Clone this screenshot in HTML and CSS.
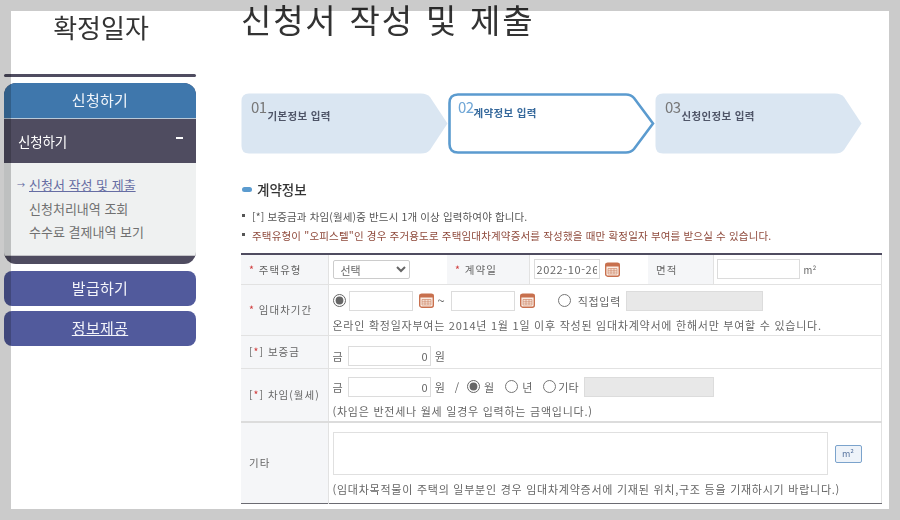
FILE: index.html
```html
<!DOCTYPE html>
<html lang="ko">
<head>
<meta charset="utf-8">
<title>확정일자</title>
<link rel="stylesheet" href="styles.css">
</head>
<body>
<div class="page">
  <aside class="side">
    <div class="brand">확정일자</div>
    <div class="side-rule"></div>
    <div class="panel">
      <div class="panel-head">신청하기</div>
      <div class="panel-sub"><span>신청하기</span><span class="minus"></span></div>
      <ul class="panel-list">
        <li class="on"><span class="arrow">→</span><a href="#">신청서 작성 및 제출</a></li>
        <li>신청처리내역 조회</li>
        <li>수수료 결제내역 보기</li>
      </ul>
    </div>
    <div class="side-btn">발급하기</div>
    <div class="side-btn low"><u>정보제공</u></div>
  </aside>
  <main class="main">
    <h1 class="title">신청서 작성 및 제출</h1>
    <ol class="steps">
      <li class="step">
        <svg class="step-bg" viewBox="0 0 207 61"><path d="M8 .5H180Q186 .5 189 4L206.500 30.500 189 57Q186 60.500 180 60.500H8Q.5 60.500 .5 53V8Q.5 .5 8 .5Z" fill="#dae6f2"/></svg>
        <b class="num">01</b><span class="lbl">기본정보 입력</span>
      </li>
      <li class="step cur">
        <svg class="step-bg" viewBox="0 0 207 61"><path d="M10 1.500H178Q183 1.500 186 5L205 30.500 186 56Q183 59.500 178 59.500H10Q1.500 59.500 1.500 51V10Q1.500 1.500 10 1.500Z" fill="#fff" stroke="#5b9bcf" stroke-width="2.600"/></svg>
        <b class="num">02</b><span class="lbl">계약정보 입력</span>
      </li>
      <li class="step">
        <svg class="step-bg" viewBox="0 0 207 61"><path d="M8 .5H180Q186 .5 189 4L206.500 30.500 189 57Q186 60.500 180 60.500H8Q.5 60.500 .5 53V8Q.5 .5 8 .5Z" fill="#dae6f2"/></svg>
        <b class="num">03</b><span class="lbl">신청인정보 입력</span>
      </li>
    </ol>
    <h2 class="sec"><i class="pill"></i>계약정보</h2>
    <ul class="notes">
      <li>[*] 보증금과 차임(월세)중 반드시 1개 이상 입력하여야 합니다.</li>
      <li class="red">주택유형이 "오피스텔"인 경우 주거용도로 주택임대차계약증서를 작성했을 때만 확정일자 부여를 받으실 수 있습니다.</li>
    </ul>
    <table class="form">
      <colgroup><col class="c1"><col class="c2"><col class="c3"><col class="c4"><col class="c5"><col class="c6"></colgroup>
      <tr class="r1">
        <th><em>*</em> 주택유형</th>
        <td><select class="sel"><option>선택</option></select></td>
        <th><em>*</em> 계약일</th>
        <td><span class="inl"><input class="in date" value="2022-10-26"><svg class="cal" viewBox="0 0 15 15"><use href="#cal"/></svg></span></td>
        <th>면적</th>
        <td class="area-cell"><input class="in area"> <span class="unit">m²</span></td>
      </tr>
      <tr class="r2">
        <th><em>*</em> 임대차기간</th>
        <td colspan="5">
          <div class="line">
            <input type="radio" name="p" checked class="rd">
            <input class="in d2"><svg class="cal" viewBox="0 0 15 15"><use href="#cal"/></svg>
            <span class="tilde">~</span>
            <input class="in d2b"><svg class="cal" viewBox="0 0 15 15"><use href="#cal"/></svg>
            <input type="radio" name="p" class="rd rd-far">
            <span class="direct">직접입력</span>
            <input class="in off w137" disabled>
          </div>
          <p class="hint">온라인 확정일자부여는 2014년 1월 1일 이후 작성된 임대차계약서에 한해서만 부여할 수 있습니다.</p>
        </td>
      </tr>
      <tr class="r3">
        <th>[<em>*</em>] 보증금</th>
        <td colspan="5"><div class="line"><span>금</span><input class="in money" value="0"><span>원</span></div></td>
      </tr>
      <tr class="r4">
        <th>[<em>*</em>] 차임(월세)</th>
        <td colspan="5">
          <div class="line">
            <span>금</span><input class="in money" value="0"><span>원</span>
            <span class="slash">/</span>
            <input type="radio" name="u" checked class="rd"><span class="rl">월</span>
            <input type="radio" name="u" class="rd"><span class="rl">년</span>
            <input type="radio" name="u" class="rd"><span class="rl last">기타</span>
            <input class="in off w130" disabled>
          </div>
          <p class="hint">(차임은 반전세나 월세 일경우 입력하는 금액입니다.)</p>
        </td>
      </tr>
      <tr class="r5">
        <th>기타</th>
        <td colspan="5">
          <div class="line-area"><textarea class="ta"></textarea><button class="sq">m²</button></div>
          <p class="hint">(임대차목적물이 주택의 일부분인 경우 임대차계약증서에 기재된 위치,구조 등을 기재하시기 바랍니다.)</p>
        </td>
      </tr>
    </table>
  </main>
</div>
<svg class="defs" width="0" height="0"><symbol id="cal" viewBox="0 0 15 15"><rect x=".7" y="1.200" width="13.600" height="13" rx="2" fill="#fbeee6" stroke="#c8704e" stroke-width="1.400"/><rect x=".7" y="1.200" width="13.600" height="3.300" fill="#c8704e"/><path d="M3 6.500h9v5.500H3zM3 8.300h9M3 10.100h9M6 6.500v5.500M9 6.500v5.500" fill="none" stroke="#cf8a6c" stroke-width=".7"/></symbol></svg>
<div class="frame"></div>
</body>
</html>
```
FILE: styles.css
```css
* { box-sizing: border-box; }
html, body { margin: 0; padding: 0; width: 900px; height: 520px; overflow: hidden; background: #fff; }
body { font-family: "Noto Sans CJK KR", "Noto Sans", sans-serif; color: #555; font-size: 11px; }
.page { display: flex; width: 900px; height: 520px; overflow: hidden; align-items: flex-start; filter: blur(.3px); }
.defs { position: absolute; }
.frame { position: absolute; inset: 0; border: solid #cbcbcb; border-width: 11px; pointer-events: none; mix-blend-mode: multiply; }

.side { width: 192px; margin-left: 4px; flex: none; }
.brand { height: 74px; padding: 9px 0 0 2px; text-align: center; font-size: 26px; line-height: 36px; color: #333; }
.side-rule { height: 3px; background: #4f4c60; border-radius: 2px; margin-bottom: 6px; }
.panel { border-radius: 12px; overflow: hidden; background: #4f4c60; height: 181px; }
.panel-head { height: 36px; background: #3f77ac; color: #f1f5fa; text-align: center; font-size: 15px; letter-spacing: .3px; line-height: 34px; border-bottom: 1px solid #b9c9d8; }
.panel-sub { height: 44px; display: flex; justify-content: space-between; align-items: center; padding: 0 13px 0 14px; color: #fff; font-size: 13.500px; letter-spacing: -.2px; }
.minus { width: 7px; height: 2px; background: #fff; margin-bottom: 6px; }
.panel-list { list-style: none; margin: 0; padding: 10px 0 0 25px; height: 93px; background: #eff1f1; border-bottom: 1px solid #c4c4c8; font-size: 13px; line-height: 23.500px; color: #707070; position: relative; }
.panel-list li { white-space: nowrap; }
.panel-list a { color: #666da3; }
.arrow { position: absolute; left: 13px; font-size: 8px; color: #5d649c; }
.side-btn { height: 35px; margin-top: 5px; background: #515a9c; color: #f3f4fa; text-align: center; font-size: 15px; letter-spacing: .3px; line-height: 33px; border-radius: 8px; }
.panel + .side-btn { margin-top: 7px; }
.low { line-height: 34px; }

.main { margin-left: 45px; width: 640px; flex: none; }
.title { margin: 0; height: 93px; font-weight: 400; font-size: 33px; line-height: 39px; letter-spacing: 1.800px; word-spacing: 1px; color: #333; }
.steps { list-style: none; margin: 0; padding: 0; display: flex; }
.step { position: relative; width: 207px; height: 61px; flex: none; padding: 5px 0 0 10px; display: flex; align-items: flex-start; color: #4f5568; }
.step-bg { position: absolute; left: 0; top: 0; width: 207px; height: 61px; }
.num, .lbl { position: relative; }
.num { font-weight: 400; font-size: 15px; line-height: 18px; letter-spacing: -.6px; color: #777; }
.lbl { font-size: 10.500px; font-weight: 700; margin: 11px 0 0 1px; line-height: 14px; letter-spacing: .35px; }
.cur .num { color: #6fa6d6; }
.cur .lbl { color: #36699c; margin: 8px 0 0 0; }

.sec { margin: 26px 0 0; height: 18px; display: flex; align-items: center; font-size: 13.500px; font-weight: 500; color: #333; line-height: 18px; }
.pill { width: 10px; height: 5px; border-radius: 3px; background: #5b9bcf; margin: 0 5px 0 1px; }
.notes { list-style: none; margin: 9px 0 0; padding: 0; font-size: 10.500px; line-height: 19px; height: 46px; }
.notes li { padding-left: 11px; position: relative; color: #555; white-space: nowrap; letter-spacing: .13px; }
.notes li::before { content: ""; position: absolute; left: 1px; top: 7px; width: 3px; height: 3px; background: #555; }
.notes .red { color: #8f4a3c; letter-spacing: .17px; }

.form { width: 640px; margin-top: 0; border-collapse: collapse; table-layout: fixed; border-top: 2px solid #4f4c60; border-bottom: 1px solid #6b6b72; font-size: 11px; border-right: 1px solid #e2e2e2; color: #666; }
.c1 { width: 87px; } .c2 { width: 119px; } .c3 { width: 82px; } .c4 { width: 119px; } .c5 { width: 65px; } .c6 { width: 168px; }
.form th { background: #f5f6f8; font-weight: 400; font-size: 10.500px; text-align: left; padding: 0 0 0 8px; color: #666; border-right: 1px solid #e2e2e2; border-bottom: 1px solid #e2e2e2; white-space: nowrap; letter-spacing: 1px; }
.form td { padding: 0 0 0 4px; border-bottom: 1px solid #e2e2e2; vertical-align: top; white-space: nowrap; }
.form em { font-style: normal; color: #d03a3a; }
.r1 { height: 30px; } .r2 { height: 51px; } .r3 { height: 32px; } .r4 { height: 54px; } .r5 { height: 81px; }
.r1 td, .r1 th { vertical-align: middle; }
.r4 td, .r4 th { border-bottom: 2px solid #dcdcdc; }
.r5 td, .r5 th { border-bottom: 0; }
.in { height: 20px; border: 1px solid #dcdcdc; background: #fff; padding: 0 2px; font: inherit; color: #666; vertical-align: middle; outline: 0; flex: none; }
.off { background: #e8e8e8; }
.sel { width: 77px; height: 19px; font: inherit; color: #666; background: #fff; border: 1px solid #ccc; border-radius: 2px; padding: 0 0 0 3px; vertical-align: middle; }
.inl { display: flex; align-items: center; gap: 5px; }
.date { width: 66px; letter-spacing: .6px; }
.form .area-cell { padding-left: 3px; }
.area { width: 83px; vertical-align: middle; }
.unit { font-size: 9.500px; margin-left: 1px; vertical-align: -2px; }
.cal { width: 15px; height: 15px; flex: none; }
.line { display: flex; align-items: center; height: 24px; margin-top: 4px; gap: 4px; }
.rd { width: 13px; height: 13px; margin: 0; accent-color: #666; flex: none; }
.d2 { width: 64px; margin-left: -1px; }
.d2b { width: 64px; margin-left: 2px; }
.d2 + .cal { margin-left: 2px; }
.tilde { font-size: 13px; }
.d2b + .cal { margin-left: 1px; }
.rd-far { margin-left: 19px; }
.direct { margin: 0 1px 0 3px; letter-spacing: .7px; }
.w137 { width: 137px; }
.w130 { width: 130px; }
.money { width: 83px; text-align: right; margin-left: 1px; }
.slash { margin: 0 4px 0 6px; }
.rl { margin-right: 7px; }
.rl.last { margin: 0 1px 0 -2px; }
.hint { margin: 0; line-height: 16px; letter-spacing: .75px; }
.r2 .hint { margin-top: 4px; }
.r3 .line { margin-top: 8px; }
.r4 .line { margin-top: 6px; }
.r4 .hint { margin-top: 4px; }
.line-area { display: flex; align-items: center; gap: 7px; margin-top: 9px; }
.ta { width: 495px; height: 43px; border: 1px solid #e0e0e0; resize: none; display: block; outline: 0; background: #fff; flex: none; }
.sq { width: 27px; height: 18px; border: 1px solid #7ba3cc; border-radius: 2px; background: #eef3f9; font: inherit; font-size: 9px; color: #5a76a0; padding: 0; }
.r5 .hint { margin-top: 6px; }
```
